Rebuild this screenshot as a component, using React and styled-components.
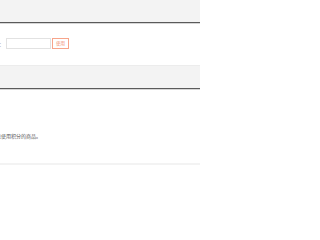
import React from 'react';
import styled, { createGlobalStyle } from 'styled-components';

const GlobalStyle = createGlobalStyle`
    body {
        margin: 0;
        background: #fff;
        font-family: "Noto Sans CJK SC", "Liberation Sans", sans-serif;
        overflow: hidden;
    }
`;

const Page = styled.div`
    width: 200px;
    height: 200px;
    overflow: hidden;
    display: flex;
    flex-direction: column;
`;

const Band = styled.div`
    height: ${props => props.$height}px;
    background-color: #f3f3f3;
    border-top: ${props => (props.$topLine ? '1px solid #ececec' : 'none')};
    border-bottom: 1px solid #5a5a5a;
    box-shadow: 0 1px 0 #d6d6d6;
    flex-shrink: 0;
`;

const Section = styled.div`
    height: ${props => props.$height}px;
    display: flex;
    align-items: flex-start;
    padding-top: ${props => props.$top}px;
    box-sizing: border-box;
    flex-shrink: 0;
`;

const Row = styled.div`
    display: flex;
    align-items: center;
    gap: 1px;
    margin-left: -6px;
`;

const Label = styled.span`
    font-size: 5px;
    color: #999;
    line-height: 10px;
`;

const Input = styled.input`
    width: 45px;
    height: 11px;
    box-sizing: border-box;
    border: 1px solid #e2e2e2;
    margin: 0 0 0 1px;
    padding: 0;
    outline: none;
`;

const UseButton = styled.button`
    width: 17px;
    height: 11px;
    box-sizing: border-box;
    border: 1px solid #f7a48a;
    background: #fff;
    color: #f08a6e;
    font-size: 4.5px;
    font-family: "Noto Sans CJK SC", sans-serif;
    padding: 0;
    line-height: 9px;
`;

const Note = styled.p`
    margin: 0 0 0 -9px;
    font-size: 5px;
    line-height: 6px;
    color: #555;
    white-space: nowrap;
`;

const Divider = styled.div`
    height: 2px;
    background: #f3f3f3;
    flex-shrink: 0;
`;

function App() {
    return (
        <Page>
            <GlobalStyle />
            <Band $height={22} />
            <Section $height={42} $top={15}>
                <Row>
                    <Label>分：</Label>
                    <Input />
                    <UseButton>使用</UseButton>
                </Row>
            </Section>
            <Band $height={22} $topLine />
            <Section $height={74} $top={44}>
                <Note>不能使用积分的商品。</Note>
            </Section>
            <Divider />
        </Page>
    );
}

export default App;
